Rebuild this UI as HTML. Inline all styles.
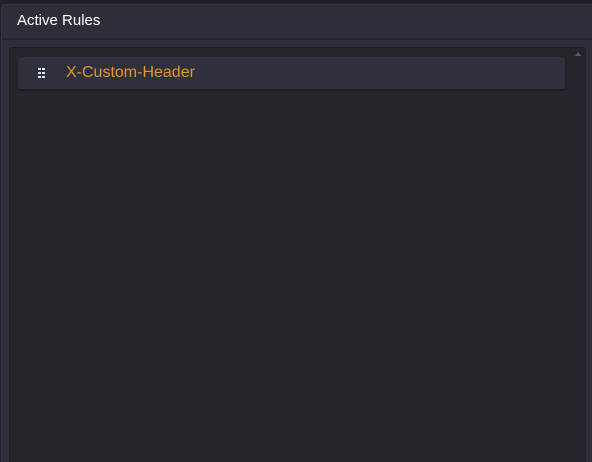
<!DOCTYPE html>
<html><head><style>
html,body{margin:0;padding:0;width:592px;height:462px;overflow:hidden;background:#202227;font-family:"Liberation Sans",sans-serif}
.panel{position:absolute;left:1px;top:4px;width:600px;height:458px;overflow:hidden;background:#2c2f39;border-radius:3px 3px 0 0;border:1px solid #33363f;border-bottom:0;box-sizing:border-box}
.hdr{position:absolute;left:0;top:0;right:0;height:33px;border-bottom:2px solid #25272d}
.hdr span{position:absolute;left:15px;top:7px;color:#fff;font-size:15px}
.box{position:absolute;left:7px;top:42px;width:575px;height:430px;background:#25262c;border:1px solid #1e1f24;border-radius:3px}
.item{position:absolute;left:8px;top:9px;width:547px;height:32px;background:#2e313b;border-radius:3px;box-shadow:0 1px 2px rgba(0,0,0,.4)}
.item span{position:absolute;left:48px;top:7px;color:#e4952f;font-size:16px}
.grip{position:absolute;left:20px;top:11px;width:8px;height:10px}
.grip i{position:absolute;width:3px;height:2px;background:#cfe6f7}
.arrow{position:absolute;right:4px;top:4px;width:0;height:0;border-left:3px solid transparent;border-right:3px solid transparent;border-bottom:4px solid #5b5e66}
</style></head><body>
<div class="panel">
<div class="hdr"><span>Active Rules</span></div>
<div class="box">
<div class="arrow"></div>
<div class="item">
<div class="grip"><i style="left:0;top:0"></i><i style="left:4px;top:0"></i><i style="left:0;top:4px"></i><i style="left:4px;top:4px"></i><i style="left:0;top:8px"></i><i style="left:4px;top:8px"></i></div>
<span>X-Custom-Header</span>
</div>
</div>
</div>
</body></html>
